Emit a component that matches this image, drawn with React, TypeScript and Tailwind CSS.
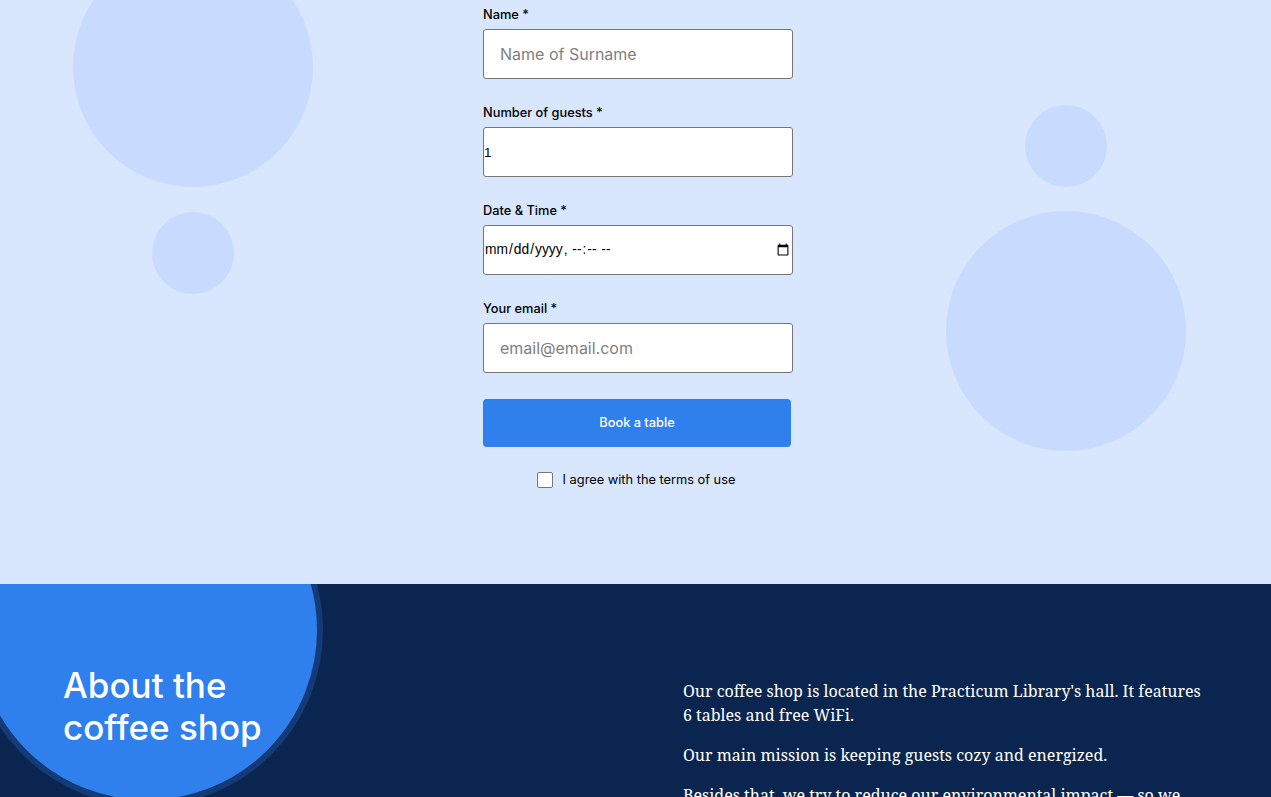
const Field = ({ label, children }: { label: string; children: React.ReactNode }) => (
  <div className="mb-[25px] flex flex-col">
    <label className="mb-[6px] text-[12.8px] leading-[17px] font-medium text-black">{label}</label>
    {children}
  </div>
)

const Booking = () => (
  <section className="relative h-[584px] overflow-hidden bg-[#d8e6fe]">
    <div className="absolute left-[73px] top-[-53px] size-[240px] rounded-full bg-[#c8dbfe]" />
    <div className="absolute left-[152px] top-[212px] size-[82px] rounded-full bg-[#c8dbfe]" />
    <div className="absolute left-[1025px] top-[105px] size-[82px] rounded-full bg-[#c8dbfe]" />
    <div className="absolute left-[946px] top-[211px] size-[240px] rounded-full bg-[#c8dbfe]" />

    <form className="relative ml-[483px] w-[310px] pt-[6px] font-['Inter',sans-serif]">
      <Field label="Name *">
        <input
          type="text"
          placeholder="Name of Surname"
          className="h-[50px] rounded-[3px] border border-[#767676] bg-white px-4 pb-px text-base placeholder:text-[#808080]"
        />
      </Field>
      <Field label="Number of guests *">
        <input
          type="number"
          defaultValue={1}
          className="h-[50px] rounded-[3px] border border-[#767676] bg-white font-['Liberation_Sans',sans-serif] text-[13.33px]"
        />
      </Field>
      <Field label="Date & Time *">
        <input
          type="datetime-local"
          className="h-[50px] rounded-[3px] border border-[#767676] bg-white font-['Liberation_Sans',sans-serif] text-[13.8px]"
        />
      </Field>
      <Field label="Your email *">
        <input
          type="email"
          placeholder="email@email.com"
          className="h-[50px] rounded-[3px] border border-[#767676] bg-white px-4 pb-px text-base placeholder:text-[#808080]"
        />
      </Field>
      <button
        type="button"
        className="mt-px h-[48px] w-[308px] rounded-[4px] bg-[#2f80ed] text-[12.8px] font-medium text-white"
      >
        Book a table
      </button>
      <div className="mt-[23px] flex items-center justify-center gap-2.5 pr-1">
        <span className="size-4 rounded-[2px] border border-[#767676] bg-white" />
        <span className="text-[12.8px] text-black">I agree with the terms of use</span>
      </div>
    </form>
  </section>
)

const About = () => (
  <section className="relative h-[213px] overflow-hidden bg-[#0a2650]">
    <div className="absolute left-[-29px] top-[-130px] size-[352px] rounded-full border-[6px] border-[#143b77] bg-[#2f80ed]" />
    <div className="relative grid grid-cols-[620px_1fr] pl-[63px] pr-[67px] pt-[80px]">
      <h2 className="font-['Inter',sans-serif] text-[35px] leading-[42px] font-medium text-white">
        About the
        <br />
        coffee shop
      </h2>
      <div className="pt-[15px] font-['Noto_Serif','DejaVu_Serif',serif] text-base leading-6 text-white">
        <p className="mb-4">
          Our coffee shop is located in the Practicum Library's hall. It features 6 tables and free WiFi.
        </p>
        <p className="mb-4">Our main mission is keeping guests cozy and energized.</p>
        <p>Besides that, we try to reduce our environmental impact — so we use only recyclable cups and packaging.</p>
      </div>
    </div>
  </section>
)

export default function App() {
  return (
    <div className="h-[797px] overflow-hidden">
      <Booking />
      <About />
    </div>
  )
}
